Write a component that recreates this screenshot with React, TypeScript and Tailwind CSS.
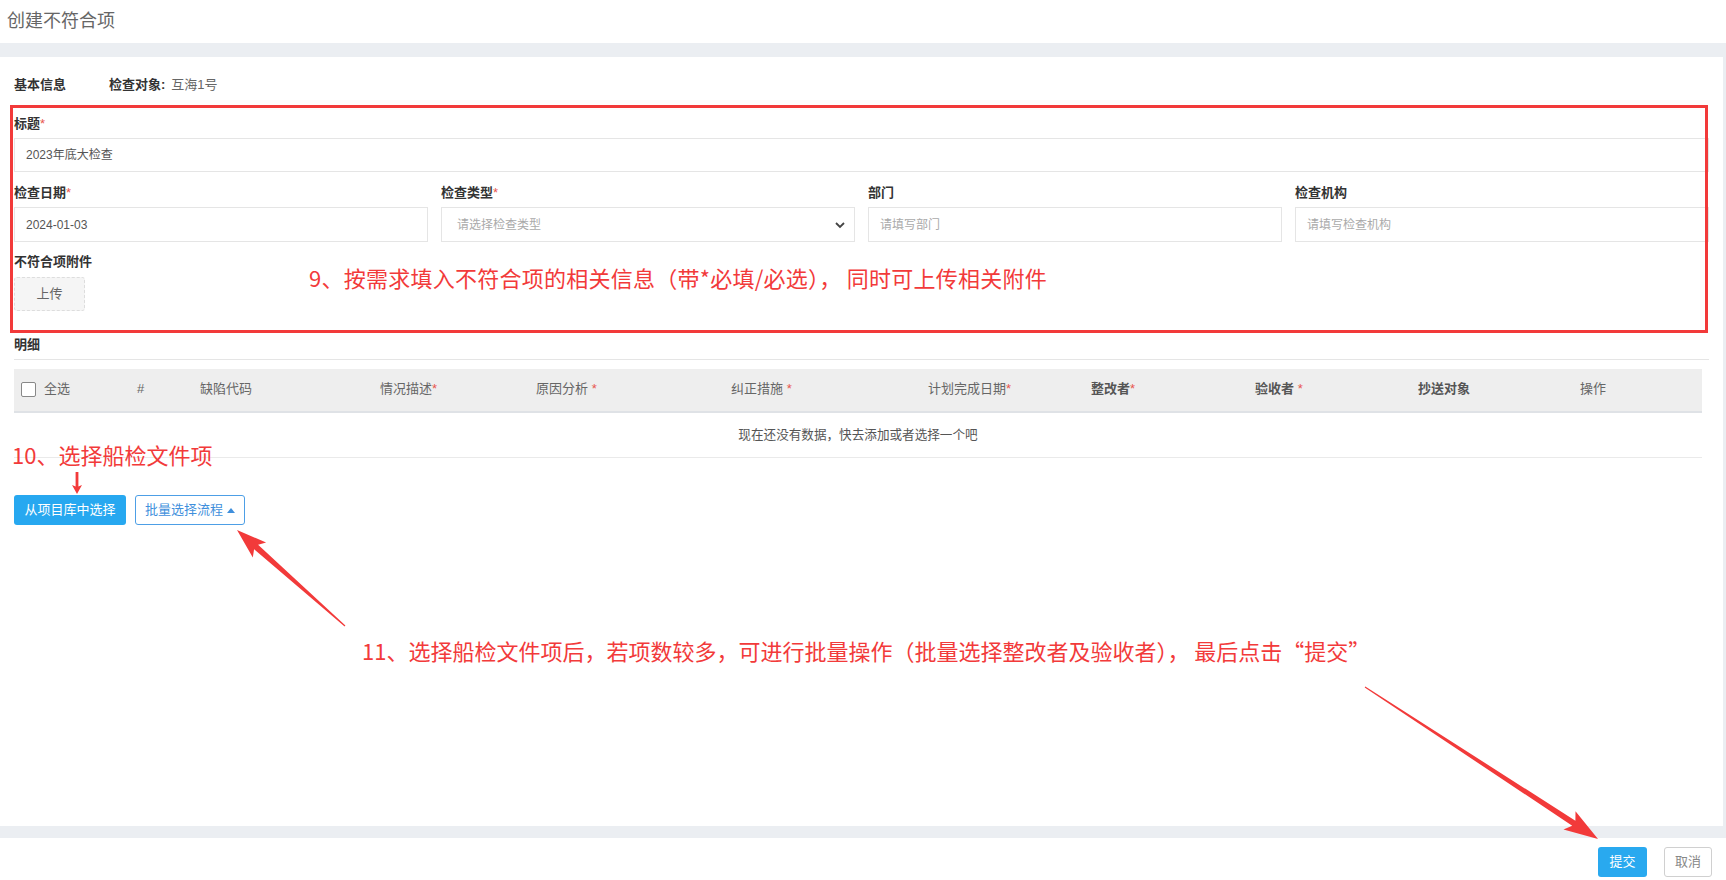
const RED = '#f23a3a';

type ArrowProps = { x1: number; y1: number; x2: number; y2: number; head: number; half: number; shaft: number; tail?: number };

// x1,y1 = tail, x2,y2 = tip
function Arrow({ x1, y1, x2, y2, head, half, shaft, tail = 0.6 }: ArrowProps) {
  const dx = x1 - x2;
  const dy = y1 - y2;
  const len = Math.sqrt(dx * dx + dy * dy);
  const ux = dx / len;
  const uy = dy / len;
  const px = -uy;
  const py = ux;
  const bx = x2 + ux * head;
  const by = y2 + uy * head;
  const nx = x2 + ux * (head * 0.85);
  const ny = y2 + uy * (head * 0.85);
  const pts = [
    [x2, y2],
    [bx + px * half, by + py * half],
    [nx + px * shaft, ny + py * shaft],
    [x1 + px * tail, y1 + py * tail],
    [x1 - px * tail, y1 - py * tail],
    [nx - px * shaft, ny - py * shaft],
    [bx - px * half, by - py * half],
  ]
    .map((p) => `${p[0].toFixed(1)},${p[1].toFixed(1)}`)
    .join(' ');
  return <polygon points={pts} fill={RED} />;
}

function Label({ text, required }: { text: string; required?: boolean }) {
  return (
    <div className="h-[20px] flex items-center text-[13px] font-bold text-[#333]">
      {text}
      {required && <span className="text-[#e8564f] font-normal">*</span>}
    </div>
  );
}

function Field({ label, required, value, placeholder, select }: { label: string; required?: boolean; value?: string; placeholder?: string; select?: boolean }) {
  return (
    <div>
      <Label text={label} required={required} />
      <div className={`mt-[4px] h-[35px] border border-[#e5e5e5] flex items-center justify-between text-[12px] ${select ? 'pl-[15px] pr-[8px]' : 'pl-[11px] pr-[10px]'}`}>
        {value ? <span className="text-[#555]">{value}</span> : <span className="text-[#aaa]">{placeholder}</span>}
        {select && (
          <svg width="12" height="12" viewBox="0 0 12 12">
            <polyline points="2,4 6,8 10,4" fill="none" stroke="#444" strokeWidth="1.8" />
          </svg>
        )}
      </div>
    </div>
  );
}

const columns: { text: string; star?: string; strong?: boolean }[] = [
  { text: '#' },
  { text: '缺陷代码' },
  { text: '情况描述', star: '*' },
  { text: '原因分析', star: ' *' },
  { text: '纠正措施', star: ' *' },
  { text: '计划完成日期', star: '*' },
  { text: '整改者', star: '*', strong: true },
  { text: '验收者', star: ' *', strong: true },
  { text: '抄送对象', strong: true },
  { text: '操作' },
];

const noteFont = { fontFamily: '"Noto Sans CJK SC", "Liberation Sans", sans-serif' };

export default function App() {
  return (
    <div
      className="relative w-[1726px] h-[880px] overflow-hidden bg-[#ebeef2]"
      style={{ fontFamily: '"Liberation Sans", "Noto Sans CJK SC", sans-serif' }}
    >
      {/* 头部 */}
      <div className="h-[43px] bg-white flex items-center pl-[7px] text-[18px] text-[#666]">创建不符合项</div>

      {/* 主体 */}
      <div className="mt-[14px] h-[769px] mr-[3px] bg-white px-[14px] pt-[18px]">
        <div className="h-[20px] flex items-center text-[13px]">
          <span className="font-bold text-[#333] w-[95px]">基本信息</span>
          <span className="font-bold text-[#333]">检查对象:</span>
          <span className="ml-[6px] text-[#666]">互海1号</span>
        </div>

        <div className="mt-[19px]">
          <Label text="标题" required />
          <div className="mt-[4px] h-[34px] border border-[#e5e5e5] flex items-center pl-[11px] text-[12px] text-[#555]">
            2023年底大检查
          </div>
        </div>

        <div className="mt-[11px] grid grid-cols-4 gap-x-[13px]">
          <Field label="检查日期" required value="2024-01-03" />
          <Field label="检查类型" required placeholder="请选择检查类型" select />
          <Field label="部门" placeholder="请填写部门" />
          <Field label="检查机构" placeholder="请填写检查机构" />
        </div>

        <div className="mt-[10px]">
          <Label text="不符合项附件" />
          <button className="mt-[5px] w-[71px] h-[34px] bg-[#f5f5f5] border border-dashed border-[#ddd] rounded-[3px] text-[13px] text-[#666]">
            上传
          </button>
        </div>

        {/* 明细 */}
        <div className="mt-[24px] pb-[4px] border-b border-[#e5e5e5] h-[25px] flex items-center text-[13px] font-bold text-[#333]">
          明细
        </div>

        <div className="mt-[9px] mr-[7px]">
          <div className="h-[44px] pb-[2px] bg-[#eeeeee] border-b-2 border-[#dfe2e6] grid grid-cols-[123px_63px_180px_156px_195px_197px_163px_164px_163px_162px_122px] items-center text-[13px] text-[#666]">
            <div className="pl-[7px] flex items-center gap-[8px]">
              <span className="w-[15px] h-[15px] border border-[#888] rounded-[2px] bg-white" />
              全选
            </div>
            {columns.map((c) => (
              <div key={c.text} className={c.strong ? 'font-bold text-[#555]' : ''}>
                {c.text}
                {c.star && <span className="text-[#e8564f] font-normal whitespace-pre">{c.star}</span>}
              </div>
            ))}
          </div>
          <div className="h-[45px] border-b border-[#eaeaea] flex items-center justify-center text-[12.6px] text-[#555]">
            现在还没有数据，快去添加或者选择一个吧
          </div>
        </div>

        <div className="mt-[37px] flex gap-[9px]">
          <button className="w-[112px] h-[30px] bg-[#27a8f0] text-white text-[13px] rounded-[3px]">从项目库中选择</button>
          <button className="w-[110px] h-[30px] border border-[#4d9fe6] text-[#3f8fdc] text-[13px] rounded-[3px] flex items-center justify-center gap-[4px]">
            批量选择流程
            <svg width="8" height="5" viewBox="0 0 8 5">
              <polygon points="0,5 4,0 8,5" fill="#3f8fdc" />
            </svg>
          </button>
        </div>
      </div>

      {/* 底部 */}
      <div className="mt-[12px] h-[42px] bg-white flex justify-end items-start pt-[9px] pr-[14px] gap-[17px]">
        <button className="w-[49px] h-[30px] bg-[#29a9ef] text-white text-[13px] rounded-[3px]">提交</button>
        <button className="w-[48px] h-[30px] border border-[#d0d0d0] text-[#888] text-[13px] rounded-[3px]">取消</button>
      </div>

      {/* 标注 */}
      <div className="absolute left-[10px] top-[105px] w-[1698px] h-[228px] border-[3px] border-[#f23a3a] pointer-events-none" />
      <div className="absolute left-[309px] top-[264px] text-[22px] leading-[26px] tracking-[0.25px] text-[#f23a3a] whitespace-nowrap" style={noteFont}>
        9、按需求填入不符合项的相关信息（带*必填/必选）， 同时可上传相关附件
      </div>
      <div className="absolute left-[12px] top-[441px] text-[22px] leading-[26px] text-[#f23a3a] whitespace-nowrap" style={noteFont}>
        10、选择船检文件项
      </div>
      <div className="absolute left-[362px] top-[637px] text-[22px] leading-[26px] text-[#f23a3a] whitespace-nowrap" style={noteFont}>
        11、选择船检文件项后，若项数较多，可进行批量操作（批量选择整改者及验收者）， 最后点击“提交”
      </div>
      <svg className="absolute left-0 top-0 pointer-events-none" width="1726" height="880">
        <Arrow x1={77} y1={472} x2={77} y2={494} head={9} half={5} shaft={1.4} tail={1.4} />
        <Arrow x1={345} y1={626} x2={237} y2={530} head={30} half={10} shaft={3} />
        <Arrow x1={1365} y1={687} x2={1598} y2={839} head={34} half={11} shaft={3} />
      </svg>
    </div>
  );
}
